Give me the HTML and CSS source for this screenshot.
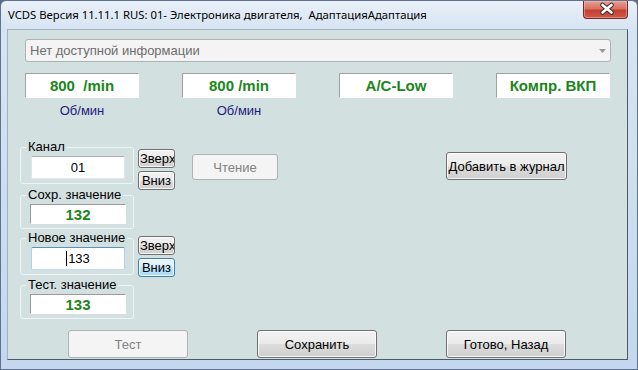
FILE: index.html
```html
<!DOCTYPE html>
<html lang="ru">
<head>
<meta charset="utf-8">
<title>VCDS</title>
<link rel="stylesheet" href="styles.css">
</head>
<body>
<div class="window">
  <div class="titlebar">
    <span class="title">VCDS Версия 11.11.1 RUS: 01- Электроника двигателя,&nbsp; АдаптацияАдаптация</span>
    <div class="close">
      <svg width="45" height="18" viewBox="0 0 45 18">
        <path d="M18.5 5 L27.5 12.5 M27.5 5 L18.5 12.5" stroke="#3b2b2b" stroke-width="4.6" stroke-linecap="round" fill="none"/>
        <path d="M18.5 5 L27.5 12.5 M27.5 5 L18.5 12.5" stroke="#ffffff" stroke-width="2.6" stroke-linecap="round" fill="none"/>
      </svg>
    </div>
  </div>
  <div class="client">
    <div class="combo">
      <span class="combo-text">Нет доступной информации</span>
      <svg class="combo-arrow" width="7" height="4" viewBox="0 0 7 4"><path d="M0 0 H7 L3.5 4 Z" fill="#9a9a9a"/></svg>
    </div>
    <div class="values">
      <div class="val">800&nbsp; /min</div>
      <div class="val">800 /min</div>
      <div class="val">A/C-Low</div>
      <div class="val">Компр. ВКП</div>
    </div>
    <div class="units">
      <span>Об/мин</span>
      <span>Об/мин</span>
    </div>
    <div class="middle">
      <div class="groups">
        <div class="grow">
          <fieldset class="grp"><legend>Канал</legend><div class="edit">01</div></fieldset>
          <div class="spins s1">
            <button class="btn spin up">Зверх</button>
            <button class="btn spin">Вниз</button>
          </div>
        </div>
        <div class="grow g2">
          <fieldset class="grp"><legend>Сохр. значение</legend><div class="ro">132</div></fieldset>
        </div>
        <div class="grow g3">
          <fieldset class="grp"><legend>Новое значение</legend><div class="edit focus"><span class="caret"></span>133</div></fieldset>
          <div class="spins s3">
            <button class="btn spin up">Зверх</button>
            <button class="btn spin focused">Вниз</button>
          </div>
        </div>
        <div class="grow g4">
          <fieldset class="grp"><legend>Тест. значение</legend><div class="ro">133</div></fieldset>
        </div>
      </div>
      <button class="btn disabled read">Чтение</button>
      <button class="btn journal">Добавить в журнал</button>
    </div>
    <div class="bottom">
      <button class="btn disabled big">Тест</button>
      <button class="btn big">Сохранить</button>
      <button class="btn big">Готово, Назад</button>
    </div>
  </div>
</div>
</body>
</html>
```
FILE: styles.css
```css
html, body {
  margin: 0;
  padding: 0;
}
body {
  width: 638px;
  height: 370px;
  overflow: hidden;
  font-family: "Liberation Sans", Arial, sans-serif;
  font-size: 13px;
  color: #000;
  background: #5a6a7c;
}
.window {
  box-sizing: border-box;
  width: 638px;
  height: 370px;
  display: flex;
  flex-direction: column;
  border: 1px solid #5f7390;
  border-radius: 6px 6px 0 0;
  background: linear-gradient(#e9f0f8 0px, #d7e4f3 28px, #c4d7ee 100%);
}
.titlebar {
  height: 28px;
  display: flex;
  align-items: flex-start;
  flex: none;
}
.title {
  flex: 1;
  padding-left: 7px;
  padding-top: 6px;
  font-family: "Noto Sans", "Open Sans", sans-serif;
  font-size: 11.3px;
  line-height: 16px;
  white-space: nowrap;
  color: #000;
}
.close {
  width: 45px;
  height: 18px;
  margin-right: 9px;
  box-sizing: border-box;
  border: 1px solid #6e2d27;
  border-top: none;
  border-radius: 0 0 4px 4px;
  background: linear-gradient(#e6a094 0%, #d9705f 45%, #c23f31 55%, #d0584a 100%);
  box-shadow: inset 0 0 0 1px rgba(255, 200, 190, 0.45);
}
.close svg {
  display: block;
  margin-top: -1px;
}
.client {
  box-sizing: border-box;
  width: 621px;
  height: 331px;
  margin-left: 6px;
  border: 1px solid;
  border-color: #a1b1c4 #4c5a6a #4c5a6a #a1b1c4;
  background: #d3e0e0;
  display: flex;
  flex-direction: column;
  flex: none;
  overflow: hidden;
}
.combo {
  box-sizing: border-box;
  width: 586px;
  height: 23px;
  margin: 9px 0 0 17px;
  border: 1px solid #adb2b5;
  border-radius: 3px;
  background: #f4f4f4;
  display: flex;
  align-items: center;
  justify-content: space-between;
  padding: 0 4px 0 4px;
  flex: none;
}
.combo-text {
  color: #6d6d6d;
  font-size: 13px;
}
.combo-arrow {
  display: block;
}
.values, .units {
  display: grid;
  grid-template-columns: repeat(4, 114px);
  column-gap: 43px;
  margin-left: 17px;
  flex: none;
}
.values {
  margin-top: 11px;
}
.val {
  box-sizing: border-box;
  height: 25px;
  background: #fff;
  border: 1px solid;
  border-color: #a0a0a0 #ffffff #ffffff #a0a0a0;
  display: flex;
  align-items: center;
  justify-content: center;
  font-weight: bold;
  font-size: 15px;
  color: #1a861a;
  white-space: nowrap;
}
.units {
  margin-top: 5px;
  line-height: 15px;
  color: #1c1c7c;
}
.units span {
  text-align: center;
}
.middle {
  display: flex;
  align-items: flex-start;
  margin: 22px 0 0 12px;
  flex: none;
}
.groups {
  display: flex;
  flex-direction: column;
}
.grow {
  display: flex;
  align-items: flex-start;
}
.g2 { margin-top: 4px; }
.g3 { margin-top: 2px; }
.g4 { margin-top: 3px; }
.grp {
  box-sizing: border-box;
  width: 114px;
  min-width: 0;
  margin: 0;
  padding: 2px 8px 4px 5px;
  border: 1px solid #eef3f3;
  border-radius: 3px;
}
.grp legend {
  padding: 0 2px;
  font-size: 13px;
  line-height: 14px;
  color: #000;
  white-space: nowrap;
}
.edit {
  box-sizing: border-box;
  width: 94px;
  height: 23px;
  margin-left: 5px;
  background: #fff;
  border: 1px solid;
  border-color: #abadb3 #e2e3ea #e3e9ef #e2e3ea;
  border-radius: 2px;
  display: flex;
  align-items: center;
  justify-content: center;
  font-size: 13px;
}
.edit.focus {
  border-color: #5c93bc #b5cfe7 #c5daed #b5cfe7;
}
.caret {
  display: inline-block;
  width: 1px;
  height: 15px;
  background: #000;
  margin-right: 1px;
}
.ro {
  box-sizing: border-box;
  width: 96px;
  height: 20px;
  margin-left: 4px;
  background: #fff;
  border: 1px solid;
  border-color: #9a9a9a #ffffff #ffffff #9a9a9a;
  display: flex;
  align-items: center;
  justify-content: center;
  font-weight: bold;
  font-size: 15px;
  color: #1a861a;
}
.btn {
  box-sizing: border-box;
  margin: 0;
  padding: 0;
  font-family: "Liberation Sans", Arial, sans-serif;
  font-size: 13px;
  color: #000;
  border: 1px solid #707070;
  border-radius: 3px;
  background: linear-gradient(#f2f2f2 0%, #ebebeb 50%, #dddddd 50%, #cfcfcf 100%);
  box-shadow: inset 0 0 0 1px rgba(255, 255, 255, 0.8);
  display: flex;
  align-items: center;
  justify-content: center;
  white-space: nowrap;
  overflow: hidden;
  flex: none;
}
.btn.disabled {
  background: #f4f4f4;
  border-color: #adb2b5;
  color: #838383;
  box-shadow: none;
}
.spins {
  display: flex;
  flex-direction: column;
  gap: 3px;
  margin-left: 4px;
}
.s1 { margin-top: 9px; margin-bottom: -6px; }
.s3 { margin-top: 5px; margin-bottom: -3px; }
.spin {
  width: 37px;
  height: 19px;
}
.spin.up {
  justify-content: flex-start;
  padding-left: 1px;
}
.spin.focused {
  border-color: #3c7fb1;
  background: linear-gradient(#eaf6fd 0%, #d9f0fc 50%, #bee6fd 50%, #a7d9f5 100%);
}
.read {
  width: 86px;
  height: 26px;
  margin: 14px 0 0 17px;
}
.journal {
  width: 121px;
  height: 28px;
  margin: 12px 0 0 168px;
}
.bottom {
  display: flex;
  gap: 69px;
  margin: 11px 0 0 60px;
  flex: none;
}
.big {
  width: 120px;
  height: 28px;
}
```
